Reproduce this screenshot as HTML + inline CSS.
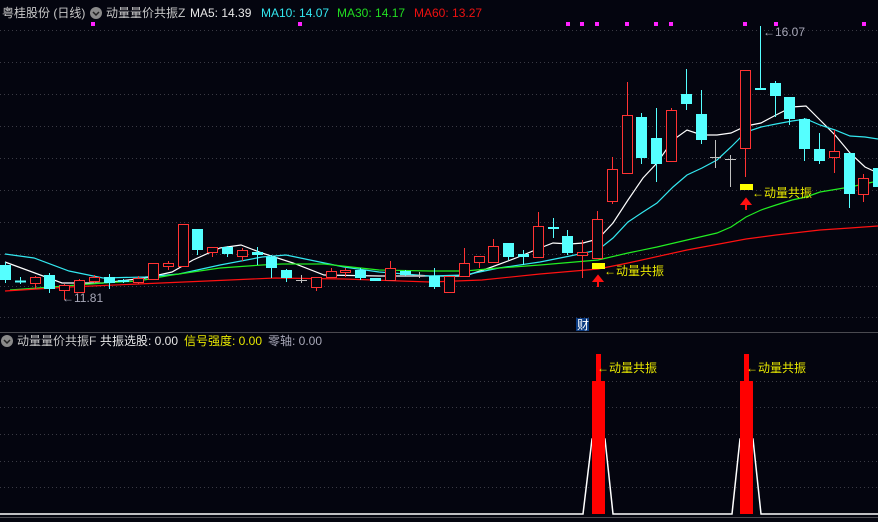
<!DOCTYPE html>
<html><head><meta charset="utf-8"><style>
html,body{margin:0;padding:0;background:#04050f;width:878px;height:522px;overflow:hidden}
svg{display:block}
text{font-family:"Liberation Sans","Noto Sans CJK SC",sans-serif;font-size:12px}
</style></head><body>
<svg id="s" width="878" height="522" viewBox="0 0 878 522" xmlns="http://www.w3.org/2000/svg">
<rect width="878" height="522" fill="#04050f"/>
<g id="grid" stroke="#3a3a44" stroke-dasharray="1,3" stroke-width="1"></g>
<line x1="0" y1="332.5" x2="878" y2="332.5" stroke="#4a4a50"/>
<line x1="0" y1="517.5" x2="878" y2="517.5" stroke="#4a4a50"/>
<!-- header -->
<text x="2" y="17" fill="#c8c8c8">粤桂股份 (日线)</text>
<circle cx="96" cy="13" r="6" fill="#8a8a8a"/><path d="M93 12l3 3 3-3" stroke="#222" stroke-width="1.5" fill="none"/>
<text x="106" y="17" fill="#c8c8c8">动量量价共振Z</text>
<text x="190" y="17" fill="#e8e8e8">MA5: 14.39</text>
<text x="261" y="17" fill="#33e8f0">MA10: 14.07</text>
<text x="337" y="17" fill="#22dd22">MA30: 14.17</text>
<text x="414" y="17" fill="#ee1111">MA60: 13.27</text>
<g id="dots" fill="#ff22ff"></g>
<g id="ma"></g>
<g id="candles"></g>
<text x="763" y="36" fill="#a8a8b8">←16.07</text>
<text x="62" y="302" fill="#a8a8b8">←11.81</text>
<!-- signals -->
<rect x="592" y="263" width="13" height="6" fill="#ffff00"/>
<path d="M598 287v-8M594 281l4-5 4 5z" stroke="#ff1111" stroke-width="2" fill="#ff1111"/>
<text x="604" y="275" fill="#e8e800">←动量共振</text>
<rect x="740" y="184" width="13" height="6" fill="#ffff00"/>
<path d="M746 210v-8M742 204l4-5 4 5z" stroke="#ff1111" stroke-width="2" fill="#ff1111"/>
<text x="752" y="197" fill="#e8e800">←动量共振</text>
<rect x="576" y="318" width="13" height="13" fill="#0a3a80"/>
<text x="577" y="329" fill="#fff" font-size="11">财</text>
<!-- lower panel -->
<circle cx="7" cy="341" r="6" fill="#8a8a8a"/><path d="M4 340l3 3 3-3" stroke="#222" stroke-width="1.5" fill="none"/>
<text x="17" y="345" fill="#c8c8c8">动量量价共振F</text>
<text x="100" y="345" fill="#e8e8e8">共振选股: 0.00</text>
<text x="184" y="345" fill="#e8e800">信号强度: 0.00</text>
<text x="268" y="345" fill="#a8a8b8">零轴: 0.00</text>
<polyline points="0,514 583,514 592,439 605,439 613,514 732,514 740,439 753,439 761,514 878,514" fill="none" stroke="#fff" stroke-width="1.5"/>
<rect x="592" y="381" width="13" height="133" fill="#ff0000"/>
<rect x="596" y="354" width="5" height="27" fill="#ff0000"/>
<rect x="740" y="381" width="13" height="133" fill="#ff0000"/>
<rect x="744" y="354" width="5" height="27" fill="#ff0000"/>
<text x="597" y="372" fill="#e8e800">←动量共振</text>
<text x="746" y="372" fill="#e8e800">←动量共振</text>
</svg>
<script>
const NS="http://www.w3.org/2000/svg";
function el(p,t,a){const e=document.createElementNS(NS,t);for(const k in a)e.setAttribute(k,a[k]);p.appendChild(e);return e;}
const grid=document.getElementById('grid');
[30,62,94,126,158,190,222,254,286,317,381,407,434,461,487].forEach(y=>el(grid,'line',{x1:0,x2:878,y1:y+.5,y2:y+.5}));
const dots=document.getElementById('dots');
[93,300,568,582,597,627,656,671,745,776,864].forEach(x=>el(dots,'rect',{x:x-2,y:22,width:4,height:4}));
const ma=document.getElementById('ma');
const lines={
"#ffffff":"5,262 62,283 103,283 145,278 172,272 193,260 220,248 241,245 262,253 293,263 324,275 379,276 430,276 465,276 489,268 516,258 540,248 553,243 570,244 583,243 598,239 613,223 628,200 643,178 657,163 673,140 687,130 702,135 717,135 731,133 746,126 761,123 776,115 792,107 806,106 820,120 835,135 850,153 865,167 878,173",
"#33e8f0":"5,254 34,258 69,271 103,278 145,277 179,274 220,265 262,257 286,255 310,260 344,267 379,272 430,276 465,275 499,268 540,262 570,256 598,250 613,238 628,222 643,212 657,203 673,187 687,175 702,168 717,160 731,147 746,132 761,127 776,124 792,121 806,119 820,125 835,130 850,136 865,137 878,139",
"#22ee22":"10,290 52,287 103,283 138,281 172,275 220,268 262,265 282,264 324,264 379,270 430,271 465,271 499,268 540,265 598,260 628,253 657,247 687,240 717,233 731,227 746,217 761,210 776,205 792,200 806,197 820,192 850,187 878,181",
"#ff1111":"5,291 69,287 138,284 207,281 275,278 344,279 430,282 482,280 540,274 598,269 628,263 687,250 746,239 776,235 820,230 850,228 878,226"};
for(const c in lines)el(ma,'polyline',{points:lines[c],fill:'none',stroke:c,'stroke-width':1.2});
const C=[
['c',265,280,262,283],['c',281,281,277,284],['r',277,283,276,289],['c',275,289,273,293],['r',285,290,284,300],
['r',280,292,279,292],['r',277,281,275,283],['c',277,283,274,289],['c',280,282,279,283],['r',278,282,276,284],
['r',263,279,263,279],['r',263,266,261,270],['r',224,266,224,266],['c',229,250,229,255],['r',247,252,247,257],
['c',247,254,246,257],['r',250,256,248,261],['c',252,255,247,265],['c',257,268,255,278],['c',270,278,269,282],
['g',280,280,275,283],['r',277,287,277,291],['r',271,277,268,277],['r',270,272,268,277],['c',270,278,268,280],
['c',278,281,278,281],['r',268,280,261,281],['c',271,275,270,276],['g',275,275,272,278],['c',276,287,268,289],
['r',276,292,276,292],['r',263,276,248,276],['r',256,262,256,268],['r',246,262,239,262],['c',243,257,243,260],
['c',254,257,250,265],['r',226,257,212,257],['c',227,229,218,238],['c',236,253,230,255],['r',252,255,240,278],
['r',219,258,211,258],['r',169,201,157,204],['r',115,173,82,173],['c',117,158,113,164],['c',138,164,108,182],
['r',110,161,108,161],['c',94,104,69,110],['c',114,140,90,144],['g',157,157,140,168],['g',159,159,155,187],
['r',70,148,70,177],['c',88,90,26,90],['c',83,96,81,117],['c',97,119,97,125],['c',119,149,118,161],
['c',149,161,133,164],['r',151,157,130,173],['c',153,194,153,208],['r',178,194,174,202],['c',168,187,165,190]];
const g=document.getElementById('candles');
C.forEach((d,i)=>{const x=Math.round(5+14.8*i);const [t,a,b,h,l]=d;
 const col=t=='r'?'#ff3333':t=='c'?'#55ffff':'#c0c0c0';
 el(g,'line',{x1:x+.5,x2:x+.5,y1:h,y2:l,stroke:col});
 if(t=='g'||b-a<2){el(g,'line',{x1:x-5,x2:x+6,y1:a+.5,y2:a+.5,stroke:col,'stroke-width':t=='c'?2:1});}
 else if(t=='r'){el(g,'rect',{x:x-5+.5,y:a+.5,width:10,height:b-a,fill:'#04050f',stroke:col});}
 else el(g,'rect',{x:x-5,y:a,width:11,height:b-a,fill:col});
});
</script>
</body></html>
